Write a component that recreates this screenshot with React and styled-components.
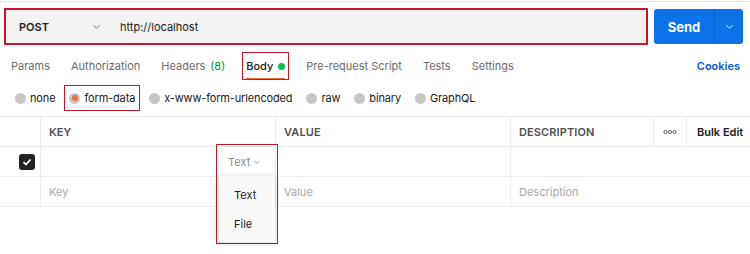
import styled, { createGlobalStyle } from "styled-components";

const Global = createGlobalStyle`
  html, body {
    margin: 0;
    padding: 0;
    background: #ffffff;
  }
  body {
    font-family: Inter, "Noto Sans", "Liberation Sans", sans-serif;
    font-size: 11px;
    color: #212121;
  }
  * { box-sizing: border-box; }
`;

const Page = styled.div`
  width: 750px;
  height: 254px;
  padding-top: 1px;
  overflow: hidden;
`;

const TopRule = styled.div`
  height: 1px;
  background: #e6e6e6;
`;

const RequestRow = styled.div`
  display: flex;
  align-items: center;
  gap: 6px;
  margin-top: 6px;
  padding: 0 7px 0 4px;
  height: 37px;
`;

const UrlBox = styled.div`
  flex: 1;
  height: 37px;
  display: flex;
  align-items: stretch;
  background: #f2f2f2;
  border: 2px solid #c4172f;
`;

const Method = styled.div`
  width: 104px;
  display: flex;
  align-items: center;
  justify-content: space-between;
  padding: 0 8px 0 13px;
  font-size: 11px;
  font-weight: 600;
  color: #212121;
  border-right: 1px solid #fafafa;
`;

const Url = styled.div`
  display: flex;
  align-items: center;
  padding-left: 10px;
  font-size: 11px;
  color: #212121;
`;

const Send = styled.div`
  width: 89px;
  height: 35px;
  display: flex;
  background: #0c72e8;
  border-radius: 3px;
  color: #ffffff;
`;

const SendMain = styled.div`
  width: 61px;
  display: flex;
  align-items: center;
  justify-content: center;
  font-size: 13px;
  font-weight: 700;
  border-right: 1px solid #0a63cb;
`;

const SendMore = styled.div`
  flex: 1;
  display: flex;
  align-items: center;
  justify-content: center;
`;

const Tabs = styled.div`
  display: flex;
  align-items: center;
  gap: 13px;
  height: 28px;
  margin-top: 7px;
  padding: 0 10px 0 7px;
`;

const Tab = styled.div`
  display: flex;
  align-items: center;
  height: 28px;
  padding: 0 4px;
  font-size: 11px;
  color: ${(p) => (p.$active ? "#212121" : "#6b6b6b")};
  font-weight: ${(p) => (p.$active ? 500 : 400)};
  outline: ${(p) => (p.$marked ? "1.5px solid #c4172f" : "none")};
  outline-offset: -1px;
`;

const TabLabel = styled.span`
  display: flex;
  align-items: center;
  gap: 5px;
  height: 28px;
  padding-top: 2px;
  border-bottom: 2px solid ${(p) => (p.$active ? "#f26b3a" : "transparent")};
`;

const Count = styled.span`
  color: #0a8a3a;
`;

const Dot = styled.span`
  width: 7px;
  height: 7px;
  border-radius: 50%;
  background: #0cbb52;
`;

const Cookies = styled.div`
  margin-left: auto;
  font-size: 11px;
  font-weight: 600;
  color: #0b5bc4;
`;

const Radios = styled.div`
  display: flex;
  align-items: center;
  gap: 4px;
  height: 26px;
  margin-top: 5px;
  padding-left: 10px;
`;

const RadioItem = styled.div`
  display: flex;
  align-items: center;
  gap: 4px;
  height: 26px;
  padding: 0 5px;
  font-size: 11px;
  letter-spacing: -0.15px;
  color: #212121;
  outline: ${(p) => (p.$marked ? "1.5px solid #c4172f" : "none")};
  outline-offset: -1px;
`;

const Radio = styled.span`
  width: 11px;
  height: 11px;
  border-radius: 50%;
  background: #c7c7c7;
  display: flex;
  align-items: center;
  justify-content: center;
  &::after {
    content: "";
    width: 6px;
    height: 6px;
    border-radius: 50%;
    background: ${(p) => (p.$on ? "#f26b3a" : "transparent")};
  }
`;

const Table = styled.div`
  margin-top: 5px;
  border-top: 1px solid #ececec;
`;

const Row = styled.div`
  display: grid;
  grid-template-columns: ${(p) =>
    p.$head ? "40px 235px 235px 143px 33px 1fr" : "40px 235px 235px 1fr"};
  height: 30px;
  border-bottom: 1px solid #ececec;
`;

const Cell = styled.div`
  position: relative;
  display: flex;
  align-items: center;
  justify-content: ${(p) => p.$align || "flex-start"};
  padding: 0 ${(p) => (p.$pr ? p.$pr : "8px")} 0 ${(p) => (p.$pl ? p.$pl : "8px")};
  border-left: ${(p) => (p.$first ? "none" : "1px solid #ececec")};
  font-size: 11px;
  white-space: nowrap;
  color: ${(p) => (p.$muted ? "#a8a8a8" : "#212121")};
`;

const HeadCell = styled(Cell)`
  font-weight: 600;
  color: #505050;
  letter-spacing: 0.1px;
`;

const BulkCell = styled(Cell)`
  font-weight: 600;
  color: #212121;
  padding-left: 10px;
`;

const Check = styled.span`
  width: 16px;
  height: 16px;
  border-radius: 3px;
  background: #212121;
  display: flex;
  align-items: center;
  justify-content: center;
`;

const DropWrap = styled.div`
  position: absolute;
  top: -3px;
  right: -3px;
  width: 62px;
  height: 100px;
  border: 1.5px solid #c4172f;
  z-index: 2;
`;

const Trigger = styled.div`
  display: flex;
  align-items: center;
  gap: 3px;
  height: 31px;
  padding-left: 11px;
  padding-top: 2px;
  font-size: 11px;
  color: #8c8c8c;
`;

const Menu = styled.div`
  margin-left: 2px;
  width: 56px;
  padding: 4px 0;
  background: #fafafa;
  box-shadow: 0 1px 5px rgba(0, 0, 0, 0.22);
`;

const MenuItem = styled.div`
  height: 29px;
  display: flex;
  align-items: center;
  padding-left: 15px;
  font-size: 11px;
  color: #212121;
`;

const Chevron = ({ color = "#6b6b6b", size = 9 }) => (
  <svg width={size} height={size} viewBox="0 0 10 10">
    <polyline
      points="1.5,3.5 5,7 8.5,3.5"
      fill="none"
      stroke={color}
      strokeWidth="1"
    />
  </svg>
);

const Dots = () => (
  <svg width="14" height="6" viewBox="0 0 14 6">
    <circle cx="2.5" cy="3" r="1.6" fill="none" stroke="#505050" strokeWidth="0.9" />
    <circle cx="7" cy="3" r="1.6" fill="none" stroke="#505050" strokeWidth="0.9" />
    <circle cx="11.5" cy="3" r="1.6" fill="none" stroke="#505050" strokeWidth="0.9" />
  </svg>
);

const tabs = [
  { label: "Params" },
  { label: "Authorization" },
  { label: "Headers", count: "(8)" },
  { label: "Body", active: true, dot: true },
  { label: "Pre-request Script" },
  { label: "Tests" },
  { label: "Settings" },
];

const modes = ["none", "form-data", "x-www-form-urlencoded", "raw", "binary", "GraphQL"];

export default function App() {
  return (
    <Page>
      <Global />
      <TopRule />
      <RequestRow>
        <UrlBox>
          <Method>
            POST
            <Chevron />
          </Method>
          <Url>http://localhost</Url>
        </UrlBox>
        <Send>
          <SendMain>Send</SendMain>
          <SendMore>
            <Chevron color="#ffffff" />
          </SendMore>
        </Send>
      </RequestRow>

      <Tabs>
        {tabs.map((t) => (
          <Tab key={t.label} $active={t.active} $marked={t.active}>
            <TabLabel $active={t.active}>
              {t.label}
              {t.count && <Count>{t.count}</Count>}
              {t.dot && <Dot />}
            </TabLabel>
          </Tab>
        ))}
        <Cookies>Cookies</Cookies>
      </Tabs>

      <Radios>
        {modes.map((m) => (
          <RadioItem key={m} $marked={m === "form-data"}>
            <Radio $on={m === "form-data"} />
            {m}
          </RadioItem>
        ))}
      </Radios>

      <Table>
        <Row $head>
          <HeadCell $first />
          <HeadCell>KEY</HeadCell>
          <HeadCell>VALUE</HeadCell>
          <HeadCell>DESCRIPTION</HeadCell>
          <HeadCell $align="center" $pl="0" $pr="0">
            <Dots />
          </HeadCell>
          <BulkCell>Bulk Edit</BulkCell>
        </Row>
        <Row>
          <Cell $first $align="flex-end" $pr="5px">
            <Check>
              <svg width="10" height="10" viewBox="0 0 10 10">
                <polyline
                  points="1.5,5.2 4,7.5 8.5,2.5"
                  fill="none"
                  stroke="#ffffff"
                  strokeWidth="1.8"
                />
              </svg>
            </Check>
          </Cell>
          <Cell>
            <DropWrap>
              <Trigger>
                Text
                <Chevron color="#8c8c8c" size={8} />
              </Trigger>
              <Menu>
                <MenuItem>Text</MenuItem>
                <MenuItem>File</MenuItem>
              </Menu>
            </DropWrap>
          </Cell>
          <Cell />
          <Cell />
        </Row>
        <Row>
          <Cell $first />
          <Cell $muted>Key</Cell>
          <Cell $muted>Value</Cell>
          <Cell $muted>Description</Cell>
        </Row>
      </Table>
    </Page>
  );
}
